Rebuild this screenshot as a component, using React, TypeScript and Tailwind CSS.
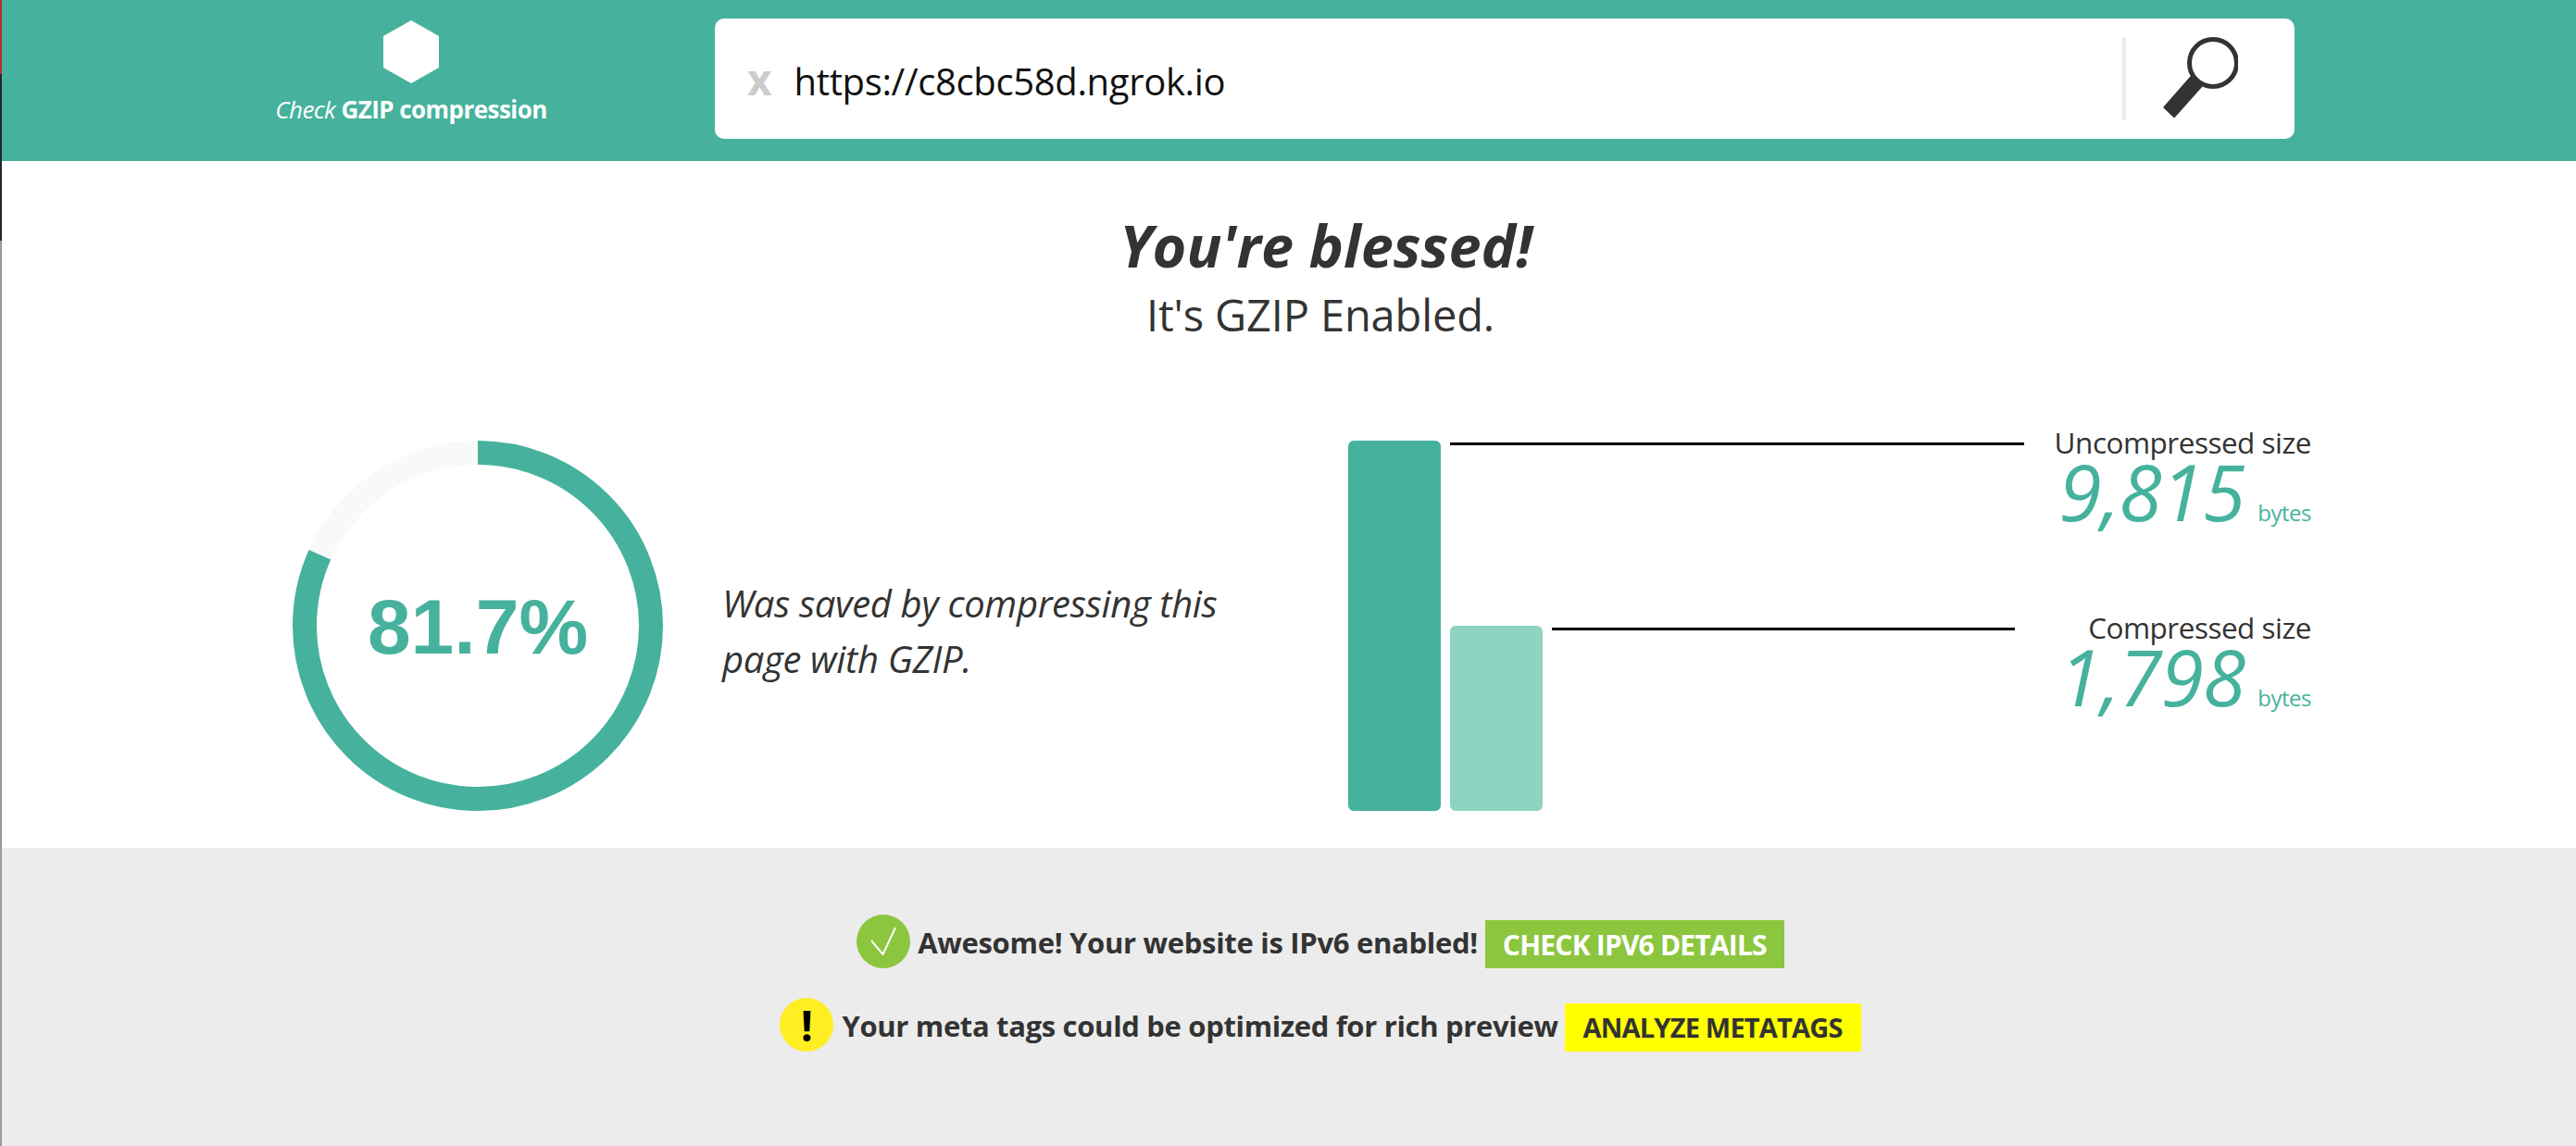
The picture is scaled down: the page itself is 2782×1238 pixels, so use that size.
import React from "react";

const FONT = "font-['Open_Sans','Noto_Sans',sans-serif]";
const C = 2 * Math.PI * 187;

function Hexagon() {
  return (
    <svg width="60" height="68" viewBox="0 0 60 68" className="block">
      <polygon points="30,0 60,17 60,51 30,68 0,51 0,17" fill="#ffffff" />
    </svg>
  );
}

function Magnifier() {
  return (
    <svg width="81" height="87" viewBox="0 0 81 87" className="block">
      <circle cx="54" cy="28" r="25.5" fill="none" stroke="#333333" strokeWidth="5" />
      <polygon points="31,43 41,53 12,85.5 2,76" fill="#333333" stroke="#333333" strokeWidth="3" strokeLinejoin="round" />
    </svg>
  );
}

function Ring() {
  return (
    <div className="grid w-[400px] h-[400px] place-items-center shrink-0">
      <svg width="400" height="400" viewBox="0 0 400 400" className="col-start-1 row-start-1 block -rotate-90">
        <circle cx="200" cy="200" r="187" fill="none" stroke="#f9f9f9" strokeWidth="26" />
        <circle cx="200" cy="200" r="187" fill="none" stroke="#46b29d" strokeWidth="26" strokeDasharray={`${C * 0.817} ${C}`} />
      </svg>
      <div className="col-start-1 row-start-1 mt-[2px] font-['Liberation_Sans',Arial,sans-serif] font-bold text-[84px] leading-none text-[#46b29d]">81.7%</div>
    </div>
  );
}

function Size({ label, value }: { label: string; value: string }) {
  return (
    <div className="ml-auto -mt-[17px] flex flex-col items-end">
      <div className="text-[31.5px] leading-[38px] text-[#333333] tracking-[-0.5px]">{label}</div>
      <div className="flex items-baseline mt-[3px] text-[#46b29d]">
        <span className="text-[84px] leading-[62px] italic tracking-[-1px]">{value}</span>
        <span className="text-[24px] ml-[14px] tracking-[-0.5px]">bytes</span>
      </div>
    </div>
  );
}

export default function App() {
  return (
    <div className={`relative h-[1238px] w-[2782px] flex flex-col overflow-hidden bg-white ${FONT}`}>
      <div className="absolute left-0 top-0 w-[2px] h-full bg-[#9a9a9a]">
        <div className="h-[80px] bg-[#b03030]" />
        <div className="h-[180px] bg-[#22282f]" />
      </div>

      <header className="h-[174px] shrink-0 bg-[#46b29d] flex items-start pl-[297px] pt-[20px]">
        <div className="w-[294px] flex flex-col items-center pt-[2px]">
          <Hexagon />
          <div className="mt-[11px] text-[26px] leading-[34px] text-white whitespace-nowrap tracking-[-0.55px]">
            <span className="italic">Check</span> <span className="font-bold">GZIP compression</span>
          </div>
        </div>
        <div className="ml-[181px] w-[1706px] h-[130px] bg-white rounded-[10px] flex items-center pl-[35px] pr-[61px]">
          <span className="text-[46px] font-bold text-[#cccccc] leading-none">x</span>
          <span className="ml-[24px] mt-[6px] text-[40px] text-[#111111] leading-none tracking-[-0.35px]">https://c8cbc58d.ngrok.io</span>
          <div className="ml-auto w-1 h-[90px] bg-[#ececec]" />
          <div className="ml-[40px] mb-[3px]"><Magnifier /></div>
        </div>
      </header>

      <main className="h-[742px] shrink-0 flex flex-col text-[#333333]">
        <h1 className="mt-[56px] pl-[82px] text-center text-[63px] leading-[70px] font-bold italic">You're blessed!</h1>
        <p className="mt-[10px] pl-[70px] text-center text-[47px] leading-[60px] tracking-[-0.15px]">It's GZIP Enabled.</p>

        <div className="mt-[106px] pl-[316px] flex items-center">
          <Ring />
          <p className="ml-[64px] mt-[12px] w-[590px] text-[40px] leading-[60px] italic tracking-[-0.35px]">
            Was saved by compressing this page with GZIP.
          </p>
          <div className="ml-[86px] w-[1040px] h-[400px] flex">
            <div className="w-[100px] h-[400px] rounded-[6px] bg-[#46b29d]" />
            <div className="ml-[10px] flex-1 flex flex-col">
              <div className="h-[200px] flex items-start">
                <div className="mt-[2px] w-[620px] h-[3px] bg-black" />
                <Size label="Uncompressed size" value="9,815" />
              </div>
              <div className="h-[200px] flex items-start">
                <div className="w-[100px] h-[200px] rounded-[6px] bg-[#8fd3c3]" />
                <div className="mt-[2px] ml-[10px] w-[500px] h-[3px] bg-black" />
                <Size label="Compressed size" value="1,798" />
              </div>
            </div>
          </div>
        </div>
      </main>

      <footer className="flex-1 bg-[#ececec] flex flex-col items-center text-[31px] font-bold text-[#333333] pt-[72px] pl-[70px]">
        <div className="flex items-center h-[58px]">
          <div className="w-[58px] h-[58px] rounded-full bg-[#8cc63f] flex items-center justify-center shrink-0">
            <svg width="28" height="30" viewBox="0 0 28 30">
              <path d="M1 14 L13.5 29 L27 0" fill="none" stroke="#ffffff" strokeWidth="2" />
            </svg>
          </div>
          <span className="ml-[8px] mt-[2px] tracking-[-0.3px] whitespace-nowrap">Awesome! Your website is IPv6 enabled!</span>
          <span className="ml-[8px] mt-[6px] h-[52px] w-[323px] bg-[#8cc63f] text-white text-[30px] uppercase flex items-center justify-center tracking-[-0.8px]">Check IPv6 details</span>
        </div>
        <div className="flex items-center h-[58px] mt-[32px]">
          <div className="w-[58px] h-[58px] rounded-full bg-[#ffee22] flex items-center justify-center shrink-0 text-[46px] text-black leading-none">!</div>
          <span className="ml-[9px] mt-[2px] tracking-[-0.33px] whitespace-nowrap">Your meta tags could be optimized for rich preview</span>
          <span className="ml-[7px] mt-[6px] h-[52px] w-[320px] bg-[#ffff00] text-[29px] uppercase flex items-center justify-center tracking-[-0.8px]">Analyze metatags</span>
        </div>
      </footer>
    </div>
  );
}
